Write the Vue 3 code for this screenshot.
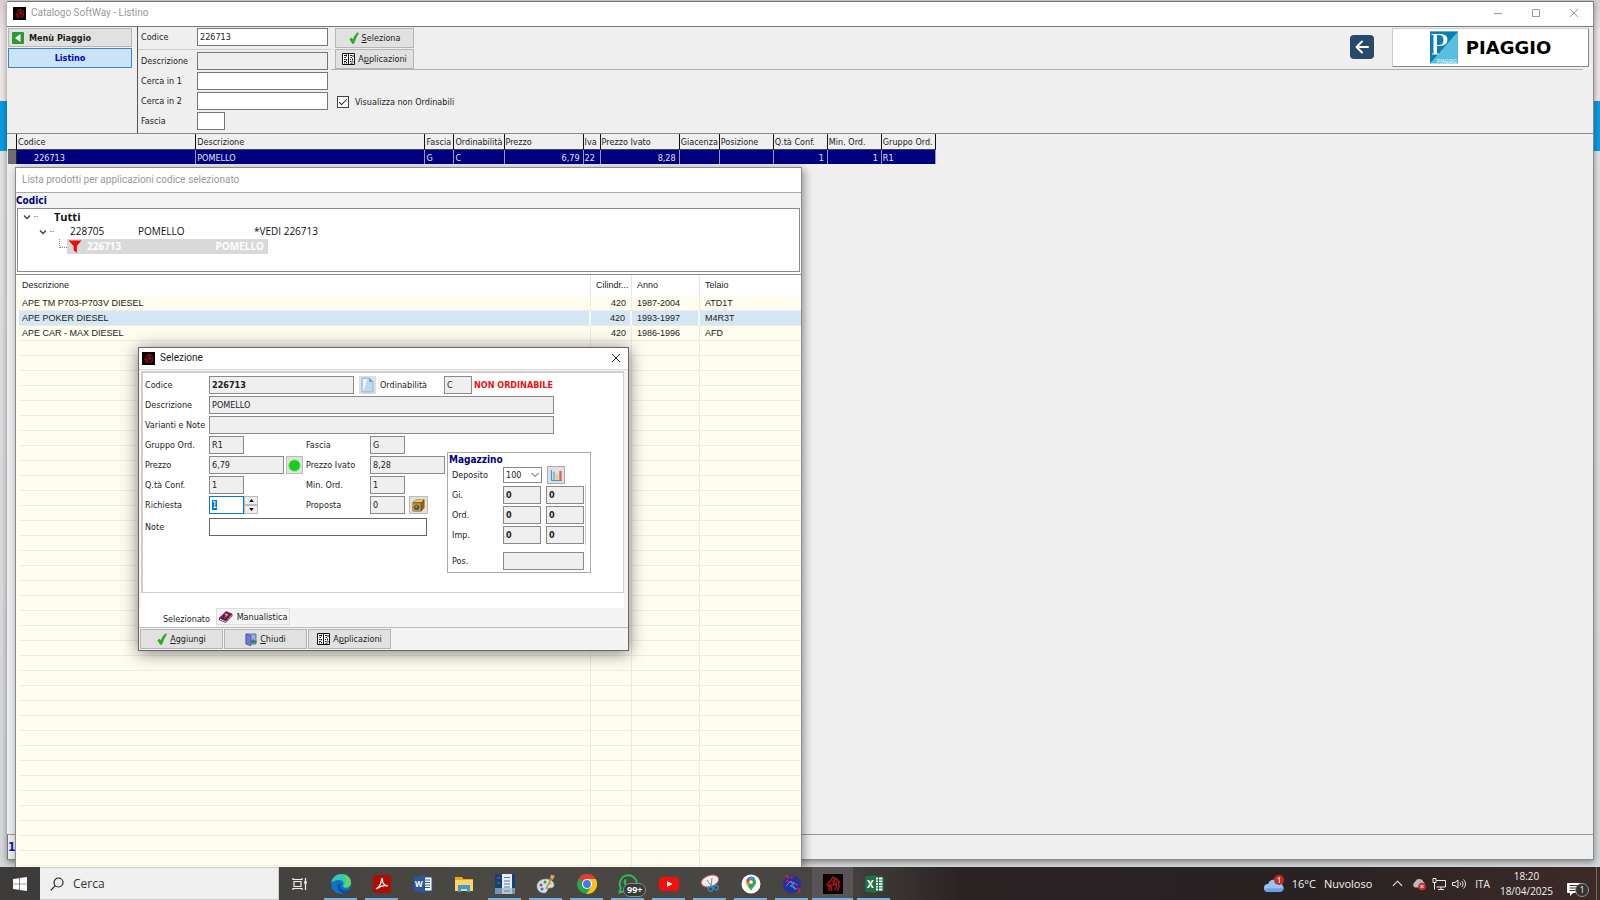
<template>
  <div class="desktop">
    <svg class="defs" aria-hidden="true">
      <symbol id="i-check" viewBox="0 0 12 14">
        <path d="M1 8.500 3 7l1.700 2.400C6 6 7.800 2.800 10.500.5l.8 1C9 5 7.200 9 5.800 13.300L4 13.500Z" fill="#22b422" stroke="#128a17" stroke-width=".6" />
      </symbol>
      <symbol id="i-grid" viewBox="0 0 13 12">
        <path d="M.5.5h12v11H.5Z" fill="#fff" stroke="#111" />
        <path d="M6.500.5v11M2 2.500h2M4.500 1.500v2M2.500 4.500h1.500M8 2.500h2M11 2v2M8.500 4.500h1.500M2 6.500h1.500M4.500 6v1.500M8 6.500h1M10.500 5.500v2M2 8.500h2M4.500 9v1.500M2 10h1M8 8.500h1.500M11 8v1.500M8.500 10.200h2" stroke="#111" fill="none" />
      </symbol>
      <symbol id="i-horse" viewBox="0 0 20 20">
        <path d="M0 0h20v20H0Z" fill="#090204" />
        <path d="M6 17c-.5-3 .4-5 2.500-7L5.500 12 4 10.500 7.500 7 10 3l1.500 1.500L14 5l2.500 3-1 2 .8 2.500L14 17M9 7l2.500 1-1.500 3 3-1 .5 3-2 3M8 12l1 5M12 4.500l-1 2.500M14 7l-1 3" fill="none" stroke="#c3161f" stroke-width="1.300" />
      </symbol>
    </svg>

    <main class="desk">
      <div class="desk-band"></div>
      <section class="window main-window">
        <header class="titlebar">
          <svg class="app-icon"><use href="#i-horse" /></svg>
          <span class="title">Catalogo SoftWay - Listino</span>
          <button class="win-btn" aria-label="Riduci"><svg viewBox="0 0 10 10"><path d="M1 5.500h8" /></svg></button>
          <button class="win-btn" aria-label="Ingrandisci"><svg viewBox="0 0 10 10"><path d="M1.500 1.500h7v7h-7Z" /></svg></button>
          <button class="win-btn" aria-label="Chiudi"><svg viewBox="0 0 10 10"><path d="m1 1 8 8M9 1 1 9" /></svg></button>
        </header>

        <div class="toolbar">
          <nav class="side">
            <button class="side-btn">
              <svg viewBox="0 0 12 12"><rect width="12" height="12" rx="1" fill="#2f9a35" /><path d="M8.500 2v8L3 6Z" fill="#fff" /></svg>
              Menù Piaggio
            </button>
            <button class="side-btn current">Listino</button>
          </nav>

          <div class="search">
            <div class="search-row first"><label for="f-codice">Codice</label><input id="f-codice" v-model="search.codice" /></div>
            <div class="search-row"><label for="f-descr">Descrizione</label><input id="f-descr" v-model="search.descrizione" readonly /></div>
            <div class="search-row"><label for="f-c1">Cerca in 1</label><input id="f-c1" v-model="search.cerca1" /></div>
            <div class="search-row"><label for="f-c2">Cerca in 2</label><input id="f-c2" v-model="search.cerca2" /></div>
            <div class="search-row"><label for="f-fascia">Fascia</label><input id="f-fascia" v-model="search.fascia" class="tiny" /></div>
          </div>

          <div class="tools">
            <div class="tools-top">
              <div class="tool-btns">
                <button class="btn"><svg class="ic-check"><use href="#i-check" /></svg><span><u>S</u>eleziona</span></button>
                <button class="btn"><svg class="ic-grid"><use href="#i-grid" /></svg><span>A<u>p</u>plicazioni</span></button>
              </div>
              <button class="back" aria-label="Indietro">
                <svg viewBox="0 0 24 24"><path d="M18 12H7M12 6.500 6.500 12l5.500 5.500" /></svg>
              </button>
              <div class="brand">
                <svg class="brand-logo" viewBox="0 0 28 32">
                  <path d="M0 0h28v32H0Z" fill="#58bfdf" />
                  <path d="M0 0h28L0 32Z" fill="#0b7fb3" />
                  <path d="M1.500 2.500H10c5 0 7.500 2.200 7.500 5.800S14.500 14.500 9.500 14.500H7V22H8.500v1H2v-1h1.500V3.500h-2ZM7 3.500v10h2c3 0 4.500-1.800 4.500-5s-1.500-5-4.500-5Z" fill="#fff" fill-rule="evenodd" />
                  <text x="7" y="31" class="logo-text">PIAGGIO</text>
                </svg>
                <span class="brand-name">PIAGGIO</span>
              </div>
            </div>
            <label class="check">
              <input v-model="search.nonOrdinabili" type="checkbox" />
              Visualizza non Ordinabili
            </label>
          </div>
        </div>

        <div class="grid-area">
          <table class="grid">
            <colgroup>
              <col class="w-mark" />
              <col v-for="c in columns" :key="c.label" :style="{ width: c.width + 'px' }" />
            </colgroup>
            <thead>
              <tr><th></th><th v-for="c in columns" :key="c.label">{{ c.label }}</th></tr>
            </thead>
            <tbody>
              <tr><td class="mark"></td><td v-for="c in columns" :key="c.label" :class="c.align">{{ c.value }}</td></tr>
            </tbody>
          </table>
        </div>
        <footer class="status">1/1</footer>
      </section>

      <section class="window list-window">
        <header class="list-title">Lista prodotti per applicazioni codice selezionato</header>
        <h2 class="codes-title">Codici</h2>
        <ul class="tree">
          <li class="root"><svg class="chev" viewBox="0 0 8 6"><path d="m1 1.500 3 3 3-3" /></svg><i class="dots"></i><b>Tutti</b></li>
          <li class="child">
            <svg class="chev" viewBox="0 0 8 6"><path d="m1 1.500 3 3 3-3" /></svg><i class="dots"></i>
            <span class="t-code">228705</span><span class="t-name">POMELLO</span><span>*VEDI 226713</span>
          </li>
          <li class="leaf">
            <i class="elbow"></i>
            <div class="picked">
              <svg viewBox="0 0 14 14"><path d="M0 .5h14L9 6.500V14L5.500 11V6.500Z" fill="#f00b0b" /></svg>
              <span class="p-code">226713</span><span>POMELLO</span>
            </div>
          </li>
        </ul>
        <div class="list-scroll">
          <table class="list">
            <colgroup><col class="w-descr" /><col class="w-cil" /><col class="w-anno" /><col /></colgroup>
            <thead><tr><th>Descrizione</th><th class="num">Cilindr...</th><th>Anno</th><th>Telaio</th></tr></thead>
            <tbody>
              <tr v-for="v in vehicles" :key="v.telaio" :class="{ on: v.telaio === 'M4R3T' }">
                <td>{{ v.nome }}</td><td class="num">{{ v.cil }}</td><td>{{ v.anno }}</td><td>{{ v.telaio }}</td>
              </tr>
              <tr v-for="n in 60" :key="n"><td></td><td></td><td></td><td></td></tr>
            </tbody>
          </table>
        </div>
      </section>

      <section class="window dialog" role="dialog" aria-label="Selezione">
        <header class="dialog-title">
          <svg class="app-icon"><use href="#i-horse" /></svg>
          <span class="title">Selezione</span>
          <button class="win-btn" aria-label="Chiudi"><svg viewBox="0 0 10 10"><path d="m1 1 8 8M9 1 1 9" /></svg></button>
        </header>
        <div class="panel">
          <div class="row">
            <label for="d-codice">Codice</label><input id="d-codice" class="w-code bold" value="226713" readonly />
            <button class="mini doc" aria-label="Documento">
              <svg viewBox="0 0 14 16"><path d="M1 .5h8l4 4v11H1Z" fill="#b9daf3" stroke="#7fa8cf" stroke-width=".8" /><path d="M2 1.500h5L3 14H2Z" fill="#eaf5fd" /><path d="M9 .5v4h4Z" fill="#5a93cc" /></svg>
            </button>
            <label for="d-ord" class="l-ord">Ordinabilità</label><input id="d-ord" class="w-ord" value="C" readonly />
            <strong class="warn">NON ORDINABILE</strong>
          </div>
          <div class="row"><label for="d-descr">Descrizione</label><input id="d-descr" class="w-long" value="POMELLO" readonly /></div>
          <div class="row"><label for="d-var">Varianti e Note</label><input id="d-var" class="w-long" readonly /></div>
          <div class="lower">
            <div class="rows">
              <div class="row">
                <label for="d-gr">Gruppo Ord.</label><div class="cell"><input id="d-gr" class="w-s" value="R1" readonly /></div>
                <label for="d-fa" class="l2">Fascia</label><input id="d-fa" class="w-s" value="G" readonly />
              </div>
              <div class="row">
                <label for="d-pr">Prezzo</label>
                <div class="cell">
                  <input id="d-pr" class="w-m" value="6,79" readonly />
                  <button class="mini" aria-label="Disponibile"><svg viewBox="0 0 14 14"><circle cx="7" cy="7" r="6" fill="#14d014" stroke="#55dc55" /></svg></button>
                </div>
                <label for="d-pi" class="l2">Prezzo Ivato</label><input id="d-pi" class="w-m" value="8,28" readonly />
              </div>
              <div class="row">
                <label for="d-qc">Q.tà Conf.</label><div class="cell"><input id="d-qc" class="w-s" value="1" readonly /></div>
                <label for="d-mo" class="l2">Min. Ord.</label><input id="d-mo" class="w-s" value="1" readonly />
              </div>
              <div class="row">
                <label for="d-ri">Richiesta</label>
                <div class="cell">
                  <input id="d-ri" ref="richiestaInput" v-model="richiesta" class="w-s edit" />
                  <div class="spin">
                    <button aria-label="Aumenta" @click="richiesta++"><svg viewBox="0 0 6 4"><path d="M3 0 6 4H0Z" /></svg></button>
                    <button aria-label="Diminuisci" @click="richiesta--"><svg viewBox="0 0 6 4"><path d="M3 4 6 0H0Z" /></svg></button>
                  </div>
                </div>
                <label for="d-po" class="l2">Proposta</label><input id="d-po" class="w-s" value="0" readonly />
                <button class="mini box" aria-label="Confezione">
                  <svg viewBox="0 0 14 14"><path d="M1 4 4 1h9v8l-3 4H1Z" fill="#a8690c" stroke="#4c2e04" stroke-width=".7" /><path d="M1 4h9v9H1Z" fill="#cf9120" /><path d="M1 4 4 1h9l-3 3Z" fill="#f0c552" /><path d="M1 4h9v9M10 4l3-3" fill="none" stroke="#4c2e04" stroke-width=".7" /><circle cx="5" cy="9" r="2.400" fill="#1b7186" stroke="#124" stroke-width=".5" /><circle cx="4.500" cy="8.300" r=".9" fill="#5cd486" /></svg>
                </button>
              </div>
              <div class="row note"><label for="d-no">Note</label><input id="d-no" class="w-note" /></div>
            </div>

            <fieldset class="store">
              <legend>Magazzino</legend>
              <div class="store-row">
                <label for="m-dep">Deposito</label>
                <div class="select"><select id="m-dep"><option>100</option></select><svg viewBox="0 0 8 6"><path d="m.5 1 3.500 3.500L7.500 1" /></svg></div>
                <button class="mini chart" aria-label="Statistiche">
                  <svg viewBox="0 0 14 14"><path d="M1.500 1v11.500H13" fill="none" stroke="#2b86c8" /><path d="M3 3h2.500v9H3Z" fill="#76bfec" /><path d="M6.500 5H9v7H6.500Z" fill="#f1d25a" /><path d="M10 2h2.500v10H10Z" fill="#dd5b78" /></svg>
                </button>
              </div>
              <div class="stock">
                <div v-for="s in stock" :key="s" class="store-row">
                  <label :for="'m-' + s">{{ s }}</label>
                  <input :id="'m-' + s" class="w-st bold" value="0" readonly />
                  <input class="w-st bold" value="0" :aria-label="s + ' 2'" readonly />
                </div>
              </div>
              <div class="store-row pos"><label for="m-pos">Pos.</label><input id="m-pos" class="w-pos" readonly /></div>
            </fieldset>
          </div>
        </div>
        <div class="tabs">
          <button class="tab active">Selezionato</button>
          <button class="tab">
            <svg viewBox="0 0 14 12"><path d="M.5 7 7 .5l6 2.500-6 7Z" fill="#7a1560" stroke="#3f0a38" stroke-width=".6" /><path d="m.5 7 6.500 3 6-7v2l-6 6.500L.5 9Z" fill="#efe3ec" stroke="#3f0a38" stroke-width=".7" /><path d="M6 3.500c1-1 3-.2 2 .9L6.500 5.500M5.600 6.800h.4" fill="none" stroke="#f3c541" stroke-width="1.100" /></svg>
            Manualistica
          </button>
        </div>
        <footer class="actions">
          <button class="btn"><svg class="ic-check"><use href="#i-check" /></svg><span><u>A</u>ggiungi</span></button>
          <button class="btn">
            <svg class="ic-door" viewBox="0 0 12 13"><path d="M1 1h10v10H1Z" fill="#a3a9e6" stroke="#3c4596" stroke-width=".7" /><path d="M1 1l5 1.500V13L1 11Z" fill="#7079d0" stroke="#3c4596" stroke-width=".6" /><path d="M11.500 7.500H8.500V5.500L6 8.500l2.500 3v-2h3Z" fill="#128a3a" /></svg>
            <span><u>C</u>hiudi</span>
          </button>
          <button class="btn"><svg class="ic-grid"><use href="#i-grid" /></svg><span>A<u>p</u>plicazioni</span></button>
        </footer>
      </section>
    </main>

    <footer class="taskbar">
      <button class="start" aria-label="Start">
        <svg viewBox="0 0 14 14"><path d="M0 2l6-.8v5.500H0ZM6.600 1.100 14 0v6.700H6.600ZM0 7.300h6v5.500L0 12ZM6.600 7.300H14V14l-7.400-1.100Z" fill="#fff" /></svg>
      </button>
      <label class="finder">
        <svg viewBox="0 0 14 14"><circle cx="8.500" cy="5.500" r="4.500" /><path d="M5.300 8.700.7 13.300" /></svg>
        <input placeholder="Cerca" aria-label="Cerca" />
      </label>
      <div class="apps">
        <button class="app" aria-label="Visualizzazione attività"><svg viewBox="0 0 20 20"><path d="M3 4v1.500h9V4M4 7.500h7v5H4ZM3 16v-1.500h9V16M15.500 4v3M15.500 10v6" fill="none" stroke="#eee" stroke-width="1.200" /><path d="M14.300 7h2.400v3h-2.400Z" fill="#eee" /></svg></button>
        <button class="app run" aria-label="Edge"><svg viewBox="0 0 20 20"><circle cx="10" cy="10" r="10" fill="#1271c4" /><path d="M.3 8.500C1.500 3 5.500 0 10.300 0 16 0 20 4 20 8.500c0 3.300-2.500 5-5 5-2 0-3.200-.7-3.200-1.500s.8-1 .8-2.500C12.600 7.500 10.500 6 8 6 4.500 6 1.500 7.500.3 8.500Z" fill="#35c5b0" /><path d="M12 .2C17 1 20 4.700 20 8.500c0 3-2.300 5-5 5-1.500 0-2.300-.3-2.800-.7C15 11 16 6 12 .2Z" fill="#5dd665" /><path d="M7 10c-1.500 3.500 1 8.500 6 9.500 2.500-.5 4.800-2 6-4-3 1.500-9 1.500-10-3-.2-1.200 0-2 .6-3Z" fill="#0c4fa0" /></svg></button>
        <button class="app run" aria-label="Acrobat"><svg viewBox="0 0 20 20"><rect x="1" y="1" width="18" height="18" rx="3" fill="#b30b00" /><path d="M4.500 14.500c2.500-1.500 4.800-5.500 5-9 .3-1.500 1.200-1.200 1 .3-.3 3 1.500 6 5.300 6.200-3-.8-7.500 0-11 2.800Z" fill="none" stroke="#fff" stroke-width="1.200" /></svg></button>
        <button class="app" aria-label="Word"><svg viewBox="0 0 20 20"><path d="M10 3h9v14h-9Z" fill="#fff" stroke="#2b579a" /><path d="M12 6h5M12 8.500h5M12 11h5M12 13.500h5" stroke="#2b579a" /><path d="M1 3 12 1v18L1 17Z" fill="#2b579a" /><text x="2" y="13" class="tile-text">W</text></svg></button>
        <button class="app" aria-label="Esplora file"><svg viewBox="0 0 20 20"><path d="M1 3h7l1.500 2H19v12H1Z" fill="#e8a71c" /><path d="M1 6h18v11H1Z" fill="#fbd565" /><path d="M4 18v-7h12v7h-3v-3H7v3Z" fill="#3b9ad9" /></svg></button>
        <button class="app run" aria-label="Server"><svg viewBox="0 0 20 20"><path d="M0 0h20v20H0Z" fill="#17406f" /><path d="M7 0h10v20H7Z" fill="#e5ebf2" /><path d="M0 14h20v6H0Z" fill="#9fb6cc" opacity=".7" /><path d="M9 3.500h6M9 7h6M9 10h6M9 13h6M9 17h6M2 4h3M2 9h3" stroke="#587ea6" /></svg></button>
        <button class="app run" aria-label="Paint"><svg viewBox="0 0 20 20"><path d="M1 12c0-4 4-7 9-7s8 3 8 6-3 3-5 3-1 5-5 5-7-3-7-7Z" fill="#cfe0ec" stroke="#8ca5b8" stroke-width=".6" /><circle cx="5" cy="11" r="1.500" fill="#d8432f" /><circle cx="9" cy="8" r="1.500" fill="#35a14e" /><circle cx="14" cy="9.500" r="1.500" fill="#edb62a" /><circle cx="6" cy="15" r="1.500" fill="#3d6fcd" /><path d="m10 15 5-10" stroke="#cf8732" stroke-width="1.500" /><path d="M14 4 15 .5l4 1.500-2.500 4Z" fill="#d9a066" /></svg></button>
        <button class="app run" aria-label="Chrome"><svg viewBox="0 0 20 20"><circle cx="10" cy="10" r="10" fill="#2ea24c" /><path d="M10 10 1.300 5A10 10 0 0 1 18.700 5Z" fill="#e33b2e" /><path d="M10 5h8.700A10 10 0 0 1 9.500 20l4.800-7.500Z" fill="#fbc116" /><circle cx="10" cy="10" r="5" fill="#fff" /><circle cx="10" cy="10" r="3.900" fill="#3b7ded" /></svg></button>
        <button class="app run" aria-label="WhatsApp"><svg viewBox="0 0 20 20"><path d="M1.500 18.500 2.800 14A8.600 8.600 0 1 1 6 17.300Z" fill="none" stroke="#28c354" stroke-width="1.800" /><path d="M6.500 5.500c1-1 1.800 0 2 1.500l-1 1.500c1 2 2 3 4 4l1.500-1 2 1.500c-.5 2-2.500 2-4.500 1-3-1.500-5-4.500-5-6.500Z" fill="#28c354" /></svg><span class="badge">99+</span></button>
        <button class="app run" aria-label="YouTube"><svg viewBox="0 0 20 20"><rect y="3" width="20" height="14" rx="4" fill="#f80d0d" /><path d="m8 7 5.500 3L8 13Z" fill="#fff" /></svg></button>
        <button class="app run" aria-label="Strumento di cattura"><svg viewBox="0 0 20 20"><ellipse cx="10" cy="7" rx="9" ry="5.500" transform="rotate(-18 10 7)" fill="#eee" stroke="#c95a5a" /><path d="m7 6 6 8M12 4l-1 9" stroke="#888" /><circle cx="10.500" cy="15" r="2.200" fill="none" stroke="#3185c9" stroke-width="1.400" /><circle cx="16" cy="13.500" r="2.200" fill="none" stroke="#3185c9" stroke-width="1.400" /></svg></button>
        <button class="app run" aria-label="Maps"><svg viewBox="0 0 20 20"><circle cx="10" cy="10" r="9.500" fill="#fff" /><path d="M10 17.500C9.500 14 5 12 5 8a5 5 0 0 1 10 0c0 4-4.500 6-5 9.500Z" fill="#34a853" /><path d="M5 8a5 5 0 0 1 5-5v5L6.500 12C5.600 10.800 5 9.500 5 8Z" fill="#f0b928" /><path d="M6 5a5 5 0 0 1 8-1l-4 4Z" fill="#4285f4" /><path d="M5.500 6 7 4l3 4-3 2Z" fill="#e5433a" /><circle cx="10" cy="8" r="1.800" fill="#fff" /></svg></button>
        <button class="app run" aria-label="Rete"><svg viewBox="0 0 20 20"><circle cx="10" cy="10.500" r="9" fill="#2230a0" /><path d="M4 7 13 9l-5 3 7 3M4 12l5-5 4 9" fill="none" stroke="#4d8fe0" /><path d="M3 2h3v3M8 4l3-1M4 7l4 1M16 14l2 3-2 2M13 10l3 1" fill="none" stroke="#e21b3a" stroke-width="1.600" /></svg></button>
        <button class="app run active" aria-label="Catalogo SoftWay"><svg><use href="#i-horse" /></svg></button>
        <button class="app run" aria-label="Excel"><svg viewBox="0 0 20 20"><path d="M10 3h9v14h-9Z" fill="#fff" stroke="#1d7145" /><path d="M10 6h9M10 8.700h9M10 11.400h9M10 14h9M14.500 3v14" stroke="#1d7145" /><path d="M1 2.500 12 1v18L1 17.500Z" fill="#1d7145" /><text x="3" y="14" class="tile-text big">X</text></svg></button>
      </div>
      <div class="tray">
        <button class="weather">
          <svg viewBox="0 0 20 18"><path d="M4 17a4 4 0 0 1 0-8 6 6 0 0 1 11-1 4.600 4.600 0 0 1 1 9Z" fill="#9cc1f4" /><path d="M4 17a4 4 0 0 1-3.700-3C6 12 14 15 19.800 12A4.600 4.600 0 0 1 16 17Z" fill="#6d9fe8" /><circle cx="15" cy="5" r="5" fill="#c92a22" /><path d="m13.800 3.500 1.500-1V8" fill="none" stroke="#fff" /></svg>
          <span>16°C</span><span>Nuvoloso</span>
        </button>
        <button aria-label="Mostra icone nascoste"><svg class="t-chev" viewBox="0 0 12 7"><path d="m1 6 5-5 5 5" fill="none" stroke="#eee" stroke-width="1.200" /></svg></button>
        <button aria-label="OneDrive"><svg class="t-ico" viewBox="0 0 14 14"><path d="M3 10.500A3 3 0 0 1 3 5a4.500 4.500 0 0 1 8.500 0c2 1 2 5.500-1 5.500Z" fill="#bbb" /><circle cx="10" cy="9.500" r="3.800" fill="#d42b34" /><path d="m8.500 8 3 3M11.500 8l-3 3" stroke="#fff" /></svg></button>
        <button aria-label="Rete cablata"><svg class="t-ico" viewBox="0 0 14 14"><path d="M4.500 3.500h9v6.500h-9M9 10v2.500M6 12.500h6M1 1.500h3v4H1ZM2.500 5.500v7" fill="none" stroke="#eee" /></svg></button>
        <button aria-label="Volume"><svg class="t-ico" viewBox="0 0 14 14"><path d="M.5 5.500H3L6 3v8L3 8.500H.5ZM8 5.500c.8 1 .8 2 0 3M9.800 4c1.600 2 1.600 4 0 6M11.600 2.500c2.500 3 2.500 6 0 9" fill="none" stroke="#eee" /></svg></button>
        <button class="lang">ITA</button>
        <button class="clock"><span>18:20</span><span>18/04/2025</span></button>
        <button class="notice" aria-label="Notifiche">
          <svg viewBox="0 0 14 14"><path d="M0 1h14v10H6l-3 3v-3H0Z" fill="#fff" /><path d="M2.500 3.500h9M2.500 6h9M2.500 8.500h6" stroke="#3a2d2c" /></svg>
          <span class="count">1</span>
        </button>
      </div>
    </footer>
  </div>
</template>

<script setup>
import { ref, reactive, onMounted } from 'vue'

const search = reactive({
  codice: '226713',
  descrizione: '',
  cerca1: '',
  cerca2: '',
  fascia: '',
  nonOrdinabili: true,
})

const columns = [
  { label: 'Codice', value: '226713', width: 179, align: 'indent' },
  { label: 'Descrizione', value: 'POMELLO', width: 229 },
  { label: 'Fascia', value: 'G', width: 29 },
  { label: 'Ordinabilità', value: 'C', width: 50 },
  { label: 'Prezzo', value: '6,79', width: 79, align: 'num' },
  { label: 'Iva', value: '22', width: 17 },
  { label: 'Prezzo Ivato', value: '8,28', width: 79, align: 'num' },
  { label: 'Giacenza', value: '', width: 40 },
  { label: 'Posizione', value: '', width: 54 },
  { label: 'Q.tà Conf.', value: '1', width: 54, align: 'num' },
  { label: 'Min. Ord.', value: '1', width: 54, align: 'num' },
  { label: 'Gruppo Ord.', value: 'R1', width: 54 },
]

const vehicles = [
  { nome: 'APE TM P703-P703V DIESEL', cil: 420, anno: '1987-2004', telaio: 'ATD1T' },
  { nome: 'APE POKER DIESEL', cil: 420, anno: '1993-1997', telaio: 'M4R3T' },
  { nome: 'APE CAR - MAX DIESEL', cil: 420, anno: '1986-1996', telaio: 'AFD' },
]

const stock = ['Gi.', 'Ord.', 'Imp.']

const richiesta = ref(1)
const richiestaInput = ref(null)

onMounted(() => {
  richiestaInput.value.focus()
  richiestaInput.value.select()
})
</script>

<style>
body { margin: 0; }
</style>

<style scoped>
* { box-sizing: border-box; }
.desktop {
  --ui: "DejaVu Sans Condensed", "Noto Sans", sans-serif;
  --segoe: "Open Sans", "Noto Sans", sans-serif;
  --caption: Roboto, "Open Sans", sans-serif;
  display: flex;
  flex-direction: column;
  height: 100vh;
  overflow: hidden;
  font: 9px/12px var(--ui);
  color: #1c1c1c;
}
.defs { position: absolute; width: 0; height: 0; }
svg { display: block; flex: none; }
button, input, select { font: inherit; color: inherit; margin: 0; border-radius: 0; }
button { padding: 0; border: 0; background: none; }
input { border: 1px solid #8a8a8a; background: #fff; height: 18px; padding: 0 2px 1px; outline: 0; min-width: 0; }
input[readonly] { background: #efefef; }
.bold { font-weight: bold; }

.desk {
  position: relative;
  flex: 1;
  min-height: 0;
  overflow: hidden;
  background: linear-gradient(#d8cdd2, #efe6e6 34px, #eee4e4 101px, #dfe1e3 152px, #d3d7da);
}
.desk-band { margin-top: 101px; height: 50px; background: #0a9be0; }
.window { position: absolute; display: flex; flex-direction: column; }

.main-window {
  top: 1px;
  left: 7px;
  right: 6px;
  bottom: 7px;
  background: #efefef;
  border: 1px solid #8b8b8b;
  border-top-color: #777;
  border-left: 0;
  box-shadow: 0 2px 6px rgba(0, 0, 0, .4);
}
.titlebar {
  display: flex;
  align-items: center;
  height: 25px;
  padding: 0 0 2px 6px;
  background: #fff;
  border-bottom: 1px solid #777;
  font: 10px/14px var(--caption);
  color: #999;
}
.app-icon { width: 13px; height: 13px; margin-right: 5px; }
.title { flex: 1; }
.win-btn { display: grid; place-items: center; width: 38px; height: 22px; }
.win-btn svg { width: 10px; height: 10px; fill: none; stroke: currentColor; }

.toolbar { display: flex; height: 107px; border-bottom: 1px solid #8b8b8b; }
.side { width: 131px; padding: 1px 5px 0 1px; border-right: 1px solid #555; }
.side-btn {
  display: flex;
  align-items: center;
  gap: 5px;
  width: 100%;
  height: 19px;
  padding-left: 3px;
  margin-bottom: 1px;
  background: #e1e1e1;
  border: 1px solid #b5b5b5;
  font-weight: bold;
}
.side-btn svg { width: 12px; height: 12px; }
.side-btn.current { height: 20px; justify-content: center; padding: 0; background: #cce4f7; border-color: #3a86c4; color: #0000e0; }
.search { width: 193px; padding-top: 1px; display: flex; flex-direction: column; gap: 2px; }
.search-row { display: flex; align-items: center; padding-left: 3px; }
.search-row label { width: 56px; }
.search-row input { width: 131px; border-color: #777; }
.search-row input.tiny { width: 28px; }
.search-row.first { padding-bottom: 3px; border-bottom: 1px solid #ccc; }
.tools { flex: 1; padding-right: 10px; }
.tools-top { display: flex; align-items: flex-start; height: 43px; padding: 1px 0 0 4px; border-bottom: 1px solid #b0b0b0; margin-bottom: 25px; }
.tool-btns { flex: 1; display: flex; flex-direction: column; gap: 1px; }
.btn {
  display: flex;
  align-items: center;
  justify-content: center;
  gap: 3px;
  width: 79px;
  height: 20px;
  background: #e1e1e1;
  border: 1px solid #b5b5b5;
}
.ic-check { width: 10px; height: 12px; }
.ic-grid { width: 13px; height: 12px; }
.ic-door { width: 12px; height: 13px; }
.back { width: 24px; height: 24px; margin: 7px 18px 0 0; border-radius: 4px; background: #274a6c; }
.back svg { fill: none; stroke: #fff; stroke-width: 2; stroke-linecap: round; stroke-linejoin: round; }
.brand {
  display: flex;
  align-items: center;
  justify-content: center;
  gap: 8px;
  width: 197px;
  height: 39px;
  margin-right: -6px;
  background: #fff;
  border: 1px solid #ccc;
  border-right-color: #888;
  border-bottom-color: #888;
}
.brand-logo { width: 28px; height: 33px; }
.logo-text { font: 5px var(--caption); fill: #fff; }
.brand-name { font: bold 18px/20px "DejaVu Sans", sans-serif; color: #000; }
.check { display: inline-flex; align-items: center; gap: 6px; padding-left: 6px; }
.check input { appearance: none; width: 12px; height: 12px; padding: 0; border: 1px solid #444; display: grid; place-items: center; }
.check input:checked::before { content: ""; width: 7px; height: 3px; border: solid #222; border-width: 0 0 1px 1px; transform: translateY(-1px) rotate(-45deg); }

.grid-area { flex: 1; padding-left: 1px; }
.grid, .list { border-collapse: separate; border-spacing: 0; table-layout: fixed; }
.grid { width: 928px; }
.w-mark { width: 9px; }
.grid th { height: 16px; padding: 1px 0 0 1px; text-align: left; font-weight: normal; white-space: nowrap; overflow: hidden; border-right: 1px solid #111; border-bottom: 1px solid #444; }
.grid td { height: 14px; padding: 1px 3px 0 1px; background: #000080; color: #e4e4ee; border-right: 1px solid #9a9ac0; }
.grid td.mark { background: #6e6e6e; border-color: #222; }
.grid td.num { text-align: right; }
.grid td.indent { padding-left: 17px; }
.status { height: 25px; padding: 4px 0; border-top: 1px solid #999; border-left: 1px solid #777; font: bold 12px/17px var(--ui); color: #1010d0; }

.list-window {
  top: 167px;
  bottom: 0;
  left: 15px;
  width: 787px;
  background: rgba(255, 255, 255, .95);
  border: 1px solid #8b8b8b;
  border-bottom: 0;
  box-shadow: 2px 2px 9px rgba(0, 0, 0, .4);
}
.list-title { height: 25px; padding: 0 6px; font: 10px/23px var(--caption); color: #999; background: #fff; border-bottom: 1px solid #aaa; }
.codes-title { margin: 0; height: 15px; font: bold 10px/16px var(--ui); color: #000080; background: #f4f4f4; }
.tree { list-style: none; margin: 0 1px; padding: 0; height: 64px; background: #fff; border: 1px solid #8b8b8b; font: 10px/15px var(--segoe); color: #111; }
.tree li { display: flex; align-items: center; height: 15px; }
.root { padding-left: 5px; }
.child { padding-left: 21px; }
.leaf { padding-left: 41px; }
.chev { width: 8px; height: 6px; fill: none; stroke: #444; stroke-width: 1.5; }
.dots { width: 4px; height: 1px; margin-left: 3px; border-top: 1px dotted #999; }
.root b { margin-left: 16px; font-size: 11px; }
.t-code { margin-left: 16px; width: 68px; }
.t-name { width: 116px; }
.elbow { width: 8px; height: 9px; margin-top: -6px; border: 1px dotted #888; border-width: 0 0 1px 1px; }
.picked { display: flex; align-items: center; width: 201px; height: 15px; padding: 0 4px 0 1px; background: #d9d9d9; color: #fff; font-weight: bold; }
.picked svg { width: 14px; height: 13px; margin-right: 5px; }
.p-code { flex: 1; }
.list-scroll { flex: 1; min-height: 0; overflow: hidden; padding-left: 3px; border-top: 1px solid #8b8b8b; margin-top: 2px; background: rgba(255, 252, 238, .9); }
.list { width: 100%; font: 9px/12px "Liberation Sans", sans-serif; }
.w-descr { width: 572px; }
.w-cil { width: 41px; }
.w-anno { width: 68px; }
.list th { height: 21px; padding: 0 5px 1px; background: #fff; text-align: left; font-weight: normal; border-right: 1px solid #e4e4e4; white-space: nowrap; }
.list td { height: 15px; padding: 0 5px; border-right: 1px solid #eceae0; border-bottom: 1px solid #efece0; }
.list th:first-child, .list td:first-child { padding-left: 3px; }
.list th:last-child, .list td:last-child { border-right-color: transparent; }
.list .num { text-align: right; }
.on td { background: #d5e7f7; border-right: 2px solid #f7f9f4; }

.dialog {
  top: 347px;
  left: 138px;
  width: 491px;
  background: #f4f4f4;
  border: 1px solid #666;
  box-shadow: 0 2px 16px rgba(0, 0, 0, .5);
}
.dialog-title { display: flex; align-items: center; height: 22px; padding: 0 0 1px 3px; background: #fff; font: 10px/14px var(--caption); border-bottom: 1px solid #d8d8d8; }
.dialog .win-btn { width: 24px; color: #222; }
.panel {
  height: 222px;
  margin: 1px 4px 0 2px;
  padding: 3px 2px 0;
  background: #fff;
  border: 2px solid #d0d0d0;
  border-width: 2px 1px 1px 2px;
  box-shadow: 0 15px 0 #fff;
  display: flex;
  flex-direction: column;
  gap: 2px;
}
.row { display: flex; align-items: center; height: 18px; }
.row > label:first-child { width: 64px; white-space: nowrap; }
.w-code { width: 145px; }
.w-long { width: 345px; }
.w-s { width: 35px; }
.w-m { width: 75px; }
.w-ord { width: 28px; }
.w-note { width: 218px; }
.cell { display: flex; width: 97px; }
.l2 { width: 64px; }
.l-ord { width: 64px; margin-left: 4px; }
.warn { margin-left: 2px; color: #f01010; }
.mini { display: grid; place-items: center; width: 17px; height: 18px; margin-left: 2px; background: #e1e1e1; border: 1px solid #bbb; }
.mini svg { width: 13px; height: 13px; }
.mini.doc { margin-left: 5px; border-color: #ddd; }
.mini.doc svg { width: 13px; height: 16px; }
.mini.box { width: 19px; margin-left: 4px; }
.edit { border-color: #0078d7; }
.edit::selection { background: #0078d7; color: #fff; }
.spin { display: flex; flex-direction: column; width: 14px; }
.spin button { display: grid; place-items: center; height: 9px; background: #eee; border: 1px solid #bbb; }
.spin svg { width: 5px; height: 3px; }
.row.note { margin-top: 2px; }
.note input { border-color: #666; }
.lower { display: flex; gap: 2px; }
.rows { display: flex; flex-direction: column; gap: 2px; width: 300px; }
.store { width: 144px; height: 121px; margin: 16px 0 0; padding: 0 4px; border: 1px solid #aaa; min-width: 0; }
.store legend { float: left; width: 100%; margin-left: -3px; padding: 0; font: bold 10px/13px var(--ui); color: #000080; }
.store-row { display: flex; align-items: center; gap: 5px; height: 18px; clear: both; }
.store-row label { width: 46px; }
.select { position: relative; width: 39px; height: 16px; }
.select select { appearance: none; width: 100%; height: 100%; padding: 0 2px; background: #fff; border: 1px solid #888; }
.select svg { position: absolute; right: 3px; top: 5px; width: 8px; height: 6px; fill: none; stroke: #444; pointer-events: none; }
.mini.chart { width: 18px; margin: 0; border-color: #aaa; }
.stock { display: flex; flex-direction: column; gap: 2px; padding: 2px 0 1px; border-right: 1px solid #ccc; }
.w-st { width: 38px; }
.w-pos { width: 81px; }
.pos { margin-top: 7px; }
.tabs { display: flex; height: 20px; margin-top: 15px; border-bottom: 1px solid #bbb; position: relative; }
.tab { display: flex; align-items: center; justify-content: center; gap: 4px; width: 74px; height: 17px; border: 1px solid #ddd; background: #f4f4f4; }
.tab.active { width: 77px; height: 19px; padding: 2px 6px 0 0; justify-content: flex-end; background: #fff; border: 0; }
.tab svg { width: 14px; height: 12px; }
.actions { display: flex; gap: 1px; padding: 1px; }
.actions .btn { width: 83px; }

.taskbar {
  display: flex;
  height: 33px;
  background: linear-gradient(90deg, #3d3b39, #4a4843 30%, #474541 52%, #2b2224 60%, #282223 82%, #3d2a27);
  color: #f2f2f2;
  font: 12px/16px var(--segoe);
}
.start { display: grid; place-items: center; width: 40px; }
.start svg { width: 14px; height: 14px; }
.finder { display: flex; align-items: center; gap: 9px; width: 239px; padding-left: 10px; background: #f0f0f0; border: 1px solid #ccc; border-left: 0; }
.finder svg { width: 14px; height: 14px; fill: none; stroke: #222; stroke-width: 1.2; }
.finder input { flex: 1; border: 0; background: none; padding: 0; }
.finder input::placeholder { color: #333; opacity: 1; }
.apps { display: flex; flex: 1; }
.app { position: relative; display: grid; place-items: center; width: 41px; }
.app svg { width: 20px; height: 20px; }
.app.run::after { content: ""; position: absolute; left: 4px; right: 4px; bottom: 0; height: 2px; background: #76b0df; }
.app.active { background: #5a5355; }
.app.active::after { left: 0; right: 0; }
.tile-text { font: bold 8px "Open Sans", sans-serif; fill: #fff; }
.tile-text.big { font-size: 10px; }
.badge { position: absolute; left: 16px; top: 16px; z-index: 1; padding: 0 3px; border: 1px solid #8a8a8a; border-radius: 8px; background: #3a3a38; font: bold 9px/12px var(--segoe); color: #fff; }
.tray { display: flex; align-items: center; padding-right: 3px; gap: 6px; }
.weather { display: flex; align-items: center; gap: 8px; margin-right: 14px; font-size: 11px; }
.weather svg { width: 20px; height: 18px; }
.t-chev { width: 11px; height: 7px; margin-right: 3px; }
.t-ico { width: 14px; height: 14px; }
.lang { font-size: 10px; margin: 0 4px 0 3px; }
.clock { display: flex; flex-direction: column; align-items: center; font-size: 10px; line-height: 15px; }
.notice { position: relative; width: 38px; height: 33px; padding: 10px 0 0 8px; border-right: 1px solid #776b69; }
.notice svg { width: 14px; height: 14px; }
.count { position: absolute; left: 16px; top: 16px; width: 14px; height: 14px; border: 1px solid #999; border-radius: 50%; background: #333; font: 9px/12px var(--segoe); }
</style>
